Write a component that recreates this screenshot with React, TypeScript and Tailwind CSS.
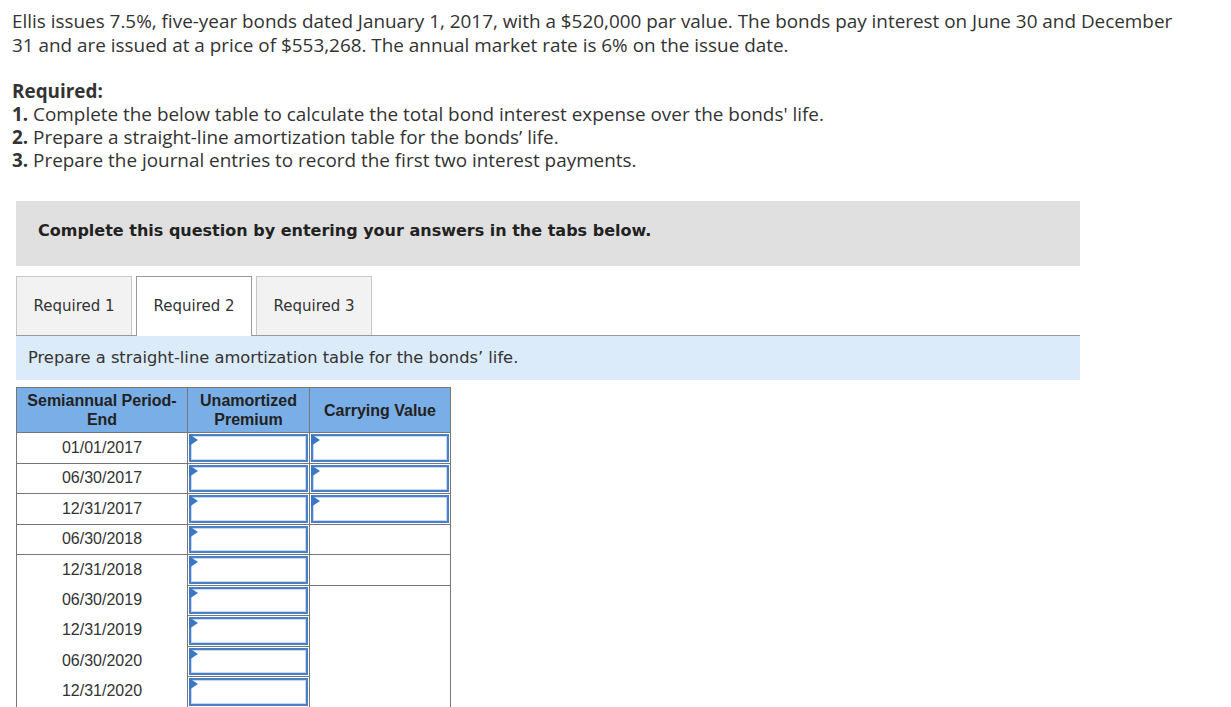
import React from 'react';

const dates = [
  '01/01/2017',
  '06/30/2017',
  '12/31/2017',
  '06/30/2018',
  '12/31/2018',
  '06/30/2019',
  '12/31/2019',
  '06/30/2020',
  '12/31/2020',
];

function InputCell() {
  return (
    <div className="relative h-full w-full border-2 border-[#4a80c8] bg-white">
      <div className="absolute inset-0 border border-[#c5d8f0]" />
      <svg className="absolute -left-[2px] -top-[2px]" width="9" height="12" viewBox="0 0 9 12">
        <polygon points="0,0 9,6 0,12" fill="#3b78c3" />
      </svg>
    </div>
  );
}

export default function App() {
  const sans = { fontFamily: '"Open Sans", "Noto Sans", sans-serif' };
  const verdana = { fontFamily: '"DejaVu Sans", Verdana, sans-serif' };
  const arial = { fontFamily: '"Liberation Sans", Arial, sans-serif' };

  return (
    <div className="min-h-[707px] bg-white text-[#333]">
      <div className="px-3 pt-[9px] text-[18.9px] leading-[24px]" style={sans}>
        <p>
          Ellis issues 7.5%, five-year bonds dated January 1, 2017, with a $520,000 par value. The bonds pay interest on June 30 and December
          <br />
          31 and are issued at a price of $553,268. The annual market rate is 6% on the issue date.
        </p>
        <div className="mt-[23px] leading-[23px]">
          <p className="font-bold">Required:</p>
          <p><span className="font-bold">1.</span> Complete the below table to calculate the total bond interest expense over the bonds' life.</p>
          <p><span className="font-bold">2.</span> Prepare a straight-line amortization table for the bonds’ life.</p>
          <p><span className="font-bold">3.</span> Prepare the journal entries to record the first two interest payments.</p>
        </div>
      </div>

      <div className="ml-4 mt-[29px] w-[1064px]">
        <div className="flex h-[65px] items-center bg-[#e0e0e0] px-[22px] pb-[6px] text-[16px] font-bold text-[#222]" style={verdana}>
          Complete this question by entering your answers in the tabs below.
        </div>

        <div className="mt-[10px] flex gap-1 border-b border-[#999]" style={verdana}>
          {['Required 1', 'Required 2', 'Required 3'].map((t, i) => (
            <div
              key={t}
              className={
                i === 1
                  ? '-mb-px flex h-[60px] w-[116px] items-center justify-center border border-b-0 border-[#999] bg-white text-[15px]'
                  : 'flex h-[59px] w-[116px] items-center justify-center border border-b-0 border-[#c8c8c8] bg-[#f2f2f2] text-[15px]'
              }
            >
              {t}
            </div>
          ))}
        </div>

        <div className="flex h-[44px] items-center bg-[#dbebf9] px-3 text-[16.3px] text-[#333]" style={verdana}>
          Prepare a straight-line amortization table for the bonds’ life.
        </div>

        <div className="mt-[7px] w-[435px] border-l border-r border-t border-[#777]" style={arial}>
          <div className="grid h-[44px] grid-cols-[171px_122px_140px] bg-[#7aaee6] text-[16px] font-bold leading-[19px] text-[#222]">
            <div className="flex items-center justify-center border-r border-[#777] text-center">Semiannual Period-<br />End</div>
            <div className="flex items-center justify-center border-r border-[#777] text-center">Unamortized<br />Premium</div>
            <div className="flex items-center justify-center text-center">Carrying Value</div>
          </div>
          <div className="grid grid-cols-[171px_122px_140px]">
            <div className="flex flex-col">
              {dates.map((d, i) => (
                <div
                  key={d}
                  className={`flex h-[30.5px] items-center justify-center border-r border-[#777] text-[16px] text-[#333] ${i < 5 ? 'border-t' : ''}`}
                >
                  {d}
                </div>
              ))}
            </div>
            <div className="flex flex-col">
              {dates.map((d) => (
                <div key={d} className="h-[30.5px] border-r border-t border-[#777] p-px">
                  <InputCell />
                </div>
              ))}
            </div>
            <div className="flex flex-col">
              {dates.slice(0, 5).map((d, i) => (
                <div key={d} className="h-[30.5px] border-t border-[#777] p-px">
                  {i < 3 ? <InputCell /> : null}
                </div>
              ))}
              <div className="flex-1 border-t border-[#777]" />
            </div>
          </div>
        </div>
      </div>
    </div>
  );
}
